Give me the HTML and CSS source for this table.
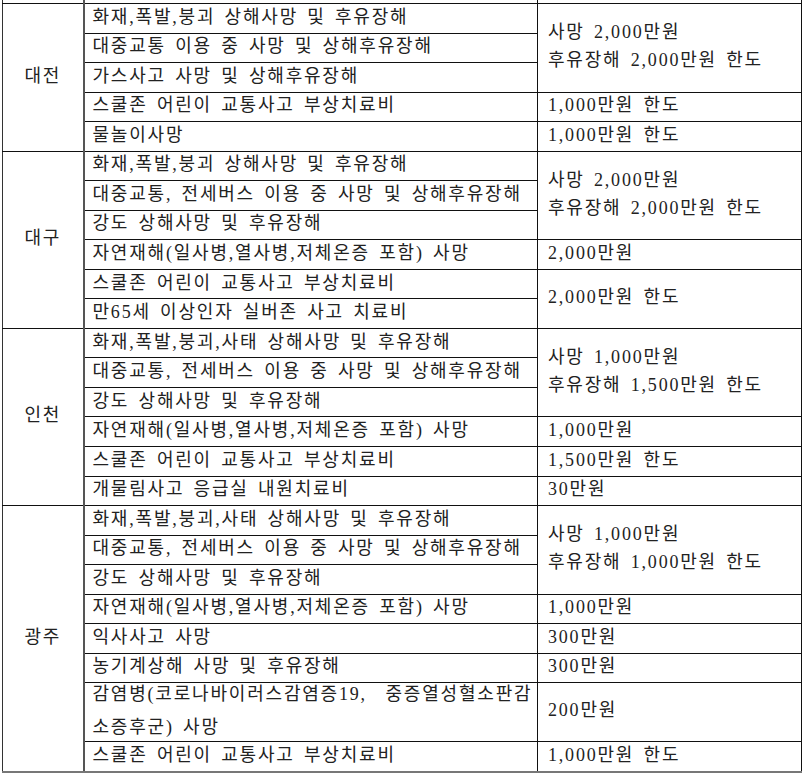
FILE: index.html
```html
<!DOCTYPE html>
<html lang="ko">
<head>
<meta charset="utf-8">
<title>지자체 시민안전보험</title>
<link rel="stylesheet" href="styles.css">
</head>
<body>
<table class="ins">
  <colgroup>
    <col class="c-region">
    <col class="c-item">
    <col class="c-amount">
  </colgroup>
  <tbody>
    <tr class="stub"><td class="region"></td><td></td><td></td></tr>

    <tr><td class="region" rowspan="5">대전</td><td>화재,폭발,붕괴 상해사망 및 후유장해</td><td class="amt multi" rowspan="3">사망 2,000만원<br>후유장해 2,000만원 한도</td></tr>
    <tr><td>대중교통 이용 중 사망 및 상해후유장해</td></tr>
    <tr><td>가스사고 사망 및 상해후유장해</td></tr>
    <tr><td>스쿨존 어린이 교통사고 부상치료비</td><td class="amt">1,000만원 한도</td></tr>
    <tr><td>물놀이사망</td><td class="amt">1,000만원 한도</td></tr>

    <tr><td class="region" rowspan="6">대구</td><td>화재,폭발,붕괴 상해사망 및 후유장해</td><td class="amt multi" rowspan="3">사망 2,000만원<br>후유장해 2,000만원 한도</td></tr>
    <tr><td>대중교통, 전세버스 이용 중 사망 및 상해후유장해</td></tr>
    <tr><td>강도 상해사망 및 후유장해</td></tr>
    <tr><td>자연재해(일사병,열사병,저체온증 포함) 사망</td><td class="amt">2,000만원</td></tr>
    <tr><td>스쿨존 어린이 교통사고 부상치료비</td><td class="amt" rowspan="2">2,000만원 한도</td></tr>
    <tr><td>만65세 이상인자 실버존 사고 치료비</td></tr>

    <tr><td class="region" rowspan="6">인천</td><td>화재,폭발,붕괴,사태 상해사망 및 후유장해</td><td class="amt multi" rowspan="3">사망 1,000만원<br>후유장해 1,500만원 한도</td></tr>
    <tr><td>대중교통, 전세버스 이용 중 사망 및 상해후유장해</td></tr>
    <tr><td>강도 상해사망 및 후유장해</td></tr>
    <tr><td>자연재해(일사병,열사병,저체온증 포함) 사망</td><td class="amt">1,000만원</td></tr>
    <tr><td>스쿨존 어린이 교통사고 부상치료비</td><td class="amt">1,500만원 한도</td></tr>
    <tr><td>개물림사고 응급실 내원치료비</td><td class="amt">30만원</td></tr>

    <tr><td class="region last-region" rowspan="8">광주</td><td>화재,폭발,붕괴,사태 상해사망 및 후유장해</td><td class="amt multi" rowspan="3">사망 1,000만원<br>후유장해 1,000만원 한도</td></tr>
    <tr><td>대중교통, 전세버스 이용 중 사망 및 상해후유장해</td></tr>
    <tr><td>강도 상해사망 및 후유장해</td></tr>
    <tr><td>자연재해(일사병,열사병,저체온증 포함) 사망</td><td class="amt">1,000만원</td></tr>
    <tr><td>익사사고 사망</td><td class="amt">300만원</td></tr>
    <tr><td>농기계상해 사망 및 후유장해</td><td class="amt">300만원</td></tr>
    <tr class="tall"><td class="two"><span class="ln">감염병(코로나바이러스감염증19,&nbsp; 중증열성혈소판감</span><span class="ln ln2">소증후군) 사망</span></td><td class="amt">200만원</td></tr>
    <tr class="last"><td>스쿨존 어린이 교통사고 부상치료비</td><td class="amt">1,000만원 한도</td></tr>
  </tbody>
</table>
</body>
</html>
```

FILE: styles.css
```css
html, body {
  margin: 0;
  padding: 0;
  background: #ffffff;
}

body {
  font-family: "Liberation Serif", "Noto Sans CJK KR", serif;
  font-size: 18px;
  color: #222222;
}

.ins {
  border-collapse: collapse;
  table-layout: fixed;
  width: 799px;
  margin-left: 2px;
}

.c-region { width: 81px; }
.c-item { width: 454px; }
.c-amount { width: 264px; }

.ins td {
  border: 1px solid #111111;
  padding: 0 0 3px 8px;
  height: 25.54px;
  line-height: 22px;
  letter-spacing: 1.8px;
  word-spacing: 3px;
  vertical-align: middle;
  white-space: nowrap;
}

.ins td.region {
  text-align: center;
  padding-left: 0;
  border-left: 1px solid #333333;
  border-right: 2px solid #555555;
}

.ins td.amt {
  padding-left: 10px;
}

.ins td.multi {
  line-height: 28px;
}

.ins tr.stub td {
  height: 3px;
  padding: 0;
  border-top: none;
  line-height: 0;
}

.ins tr.tall td {
  height: 54.1px;
  padding-bottom: 4px;
}

.ins td.two .ln {
  display: block;
  line-height: 20px;
}

.ins td.two .ln2 {
  margin-top: 13px;
}

.ins tr.last td,
.ins td.last-region {
  border-bottom: 2px solid #777777;
}
```
